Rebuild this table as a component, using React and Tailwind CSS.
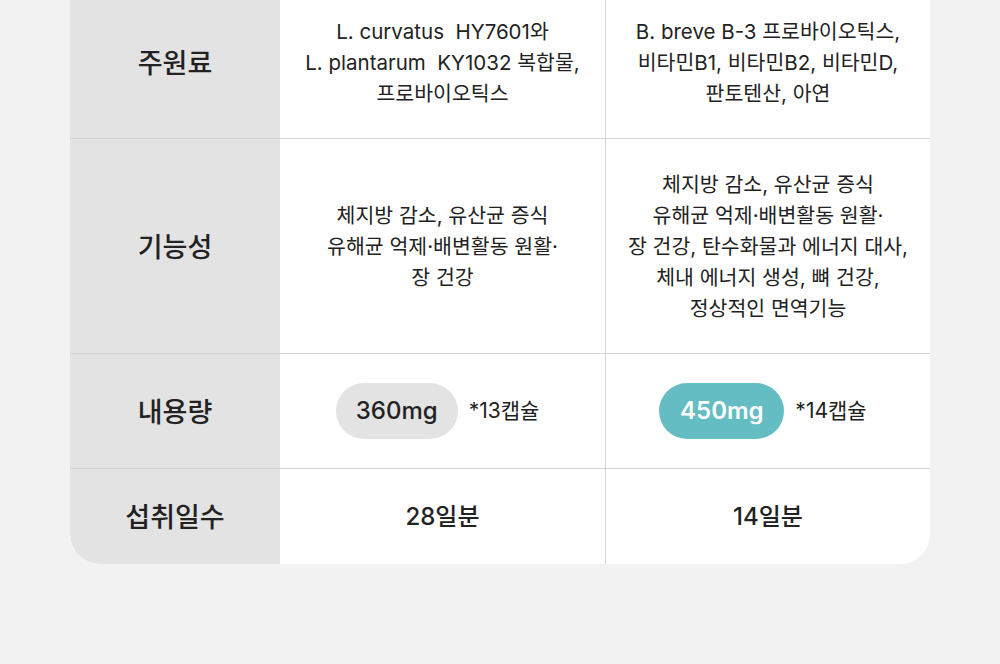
const rows = [
  {
    label: '주원료',
    h: 'h-[153px]',
    a: ['L. curvatus  HY7601와', 'L. plantarum  KY1032 복합물,', '프로바이오틱스'],
    b: ['B. breve B-3 프로바이오틱스,', '비타민B1, 비타민B2, 비타민D,', '판토텐산, 아연'],
  },
  {
    label: '기능성',
    h: 'h-[215px]',
    a: ['체지방 감소, 유산균 증식', '유해균 억제·배변활동 원활·', '장 건강'],
    b: ['체지방 감소, 유산균 증식', '유해균 억제·배변활동 원활·', '장 건강, 탄수화물과 에너지 대사,', '체내 에너지 생성, 뼈 건강,', '정상적인 면역기능'],
  },
];

function Lines({ lines }) {
  return (
    <div className="text-center text-[20.5px] leading-[31px] text-[#222] whitespace-pre">
      {lines.map((l, i) => (
        <div key={i}>{l}</div>
      ))}
    </div>
  );
}

function Label({ children, last }) {
  return (
    <div className={`bg-[#e3e3e3] flex items-center justify-center pt-[4px] text-[27px] font-medium text-[#222] ${last ? 'rounded-bl-[30px]' : ''}`}>
      {children}
    </div>
  );
}

export default function App() {
  return (
    <div
      className="w-full h-[664px] bg-[#f2f2f2] overflow-hidden"
      style={{ fontFamily: 'Inter, "Noto Sans CJK KR", sans-serif' }}
    >
      <div className="mx-[70px] -mt-[14px] bg-white rounded-b-[30px] overflow-hidden">
        {rows.map((r) => (
          <div key={r.label} className={`grid grid-cols-[210px_1fr_1fr] border-b border-[#d4d4d4] ${r.h}`}>
            <Label>{r.label}</Label>
            <div className="flex items-center justify-center">
              <Lines lines={r.a} />
            </div>
            <div className="flex items-center justify-center border-l border-[#d4d4d4]">
              <Lines lines={r.b} />
            </div>
          </div>
        ))}

        <div className="grid grid-cols-[210px_1fr_1fr] border-b border-[#d4d4d4] h-[115px]">
          <Label>내용량</Label>
          <div className="flex items-center justify-center gap-[11px] pr-[10px]">
            <span className="h-[56px] w-[122px] rounded-full bg-[#e3e3e3] flex items-center justify-center text-[24px] font-medium text-[#222]">
              360mg
            </span>
            <span className="text-[21px] text-[#222]">*13캡슐</span>
          </div>
          <div className="flex items-center justify-center gap-[11px] border-l border-[#d4d4d4] pr-[10px]">
            <span className="h-[56px] w-[125px] rounded-full bg-[#63bdc3] flex items-center justify-center text-[24px] font-semibold text-white">
              450mg
            </span>
            <span className="text-[21px] text-[#222]">*14캡슐</span>
          </div>
        </div>

        <div className="grid grid-cols-[210px_1fr_1fr] h-[95px]">
          <Label last>섭취일수</Label>
          <div className="flex items-center justify-center text-[24px] font-medium text-[#222]">28일분</div>
          <div className="flex items-center justify-center text-[24px] font-medium text-[#222] border-l border-[#d4d4d4]">
            14일분
          </div>
        </div>
      </div>
    </div>
  );
}
